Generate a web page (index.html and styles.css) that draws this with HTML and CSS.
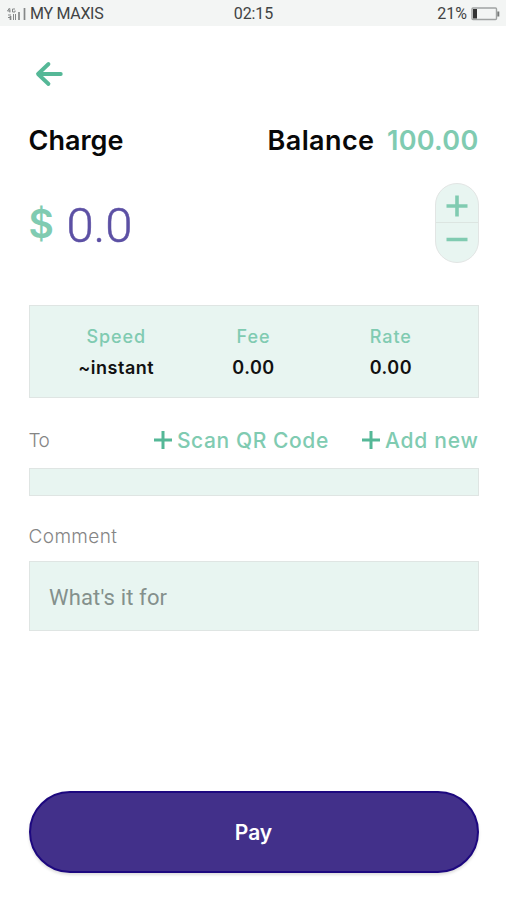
FILE: index.html
```html
<!DOCTYPE html>
<html lang="en">
<head>
<meta charset="utf-8">
<title>Charge</title>
<link rel="stylesheet" href="styles.css">
</head>
<body>
<header class="status">
  <div class="carrier">
    <svg class="signal" width="20" height="14" viewBox="0 0 20 14" fill="none" stroke="#858888">
      <path d="M2.5 1 L.5 4 H3.5 M2.8 1.5 V5.5 M8 2 H5.5 V5 H8 V3.5 M1 8 H4 M1 10.5 H4 M6.500 7 V13 M8.500 7 V13" stroke-width="1"/>
      <path d="M3.500 9 V13 M12 5 V13 M17.500 1 V13" stroke-width="1.7"/>
    </svg>
    <span>MY MAXIS</span>
  </div>
  <div class="clock">02:15</div>
  <div class="power">
    <span>21%</span>
    <svg width="29" height="14" viewBox="0 0 29 14" fill="none">
      <rect x="1" y="1" width="24.500" height="11.500" rx="1" stroke="#a0a3a2" stroke-width="1.400"/>
      <rect x="2" y="2" width="4" height="9.500" fill="#333"/>
      <path d="M27.300 4.500 V9.500" stroke="#777a79" stroke-width="2"/>
    </svg>
  </div>
</header>
<main class="page">
  <button class="back" aria-label="Back">
    <svg width="28" height="26" viewBox="0 0 28 26" fill="none" stroke="#55b897" stroke-width="3.800" stroke-linecap="round" stroke-linejoin="round">
      <path d="M25.800 13 H3.500 M13.500 3 L3 13 L13.500 23"/>
    </svg>
  </button>
  <div class="row heading">
    <span class="charge">Charge</span>
    <span class="balance"><span class="balance-label">Balance</span><span class="balance-value">100.00</span></span>
  </div>
  <div class="row amount">
    <div class="sum"><span class="currency">$</span><span class="number">0.0</span></div>
    <div class="stepper">
      <button aria-label="Increase"><svg width="22" height="22" viewBox="0 0 22 22" stroke="#80cbb1" stroke-width="3.600"><path d="M.5 11 H21.500 M11 .5 V21.500"/></svg></button>
      <button aria-label="Decrease"><svg width="22" height="22" viewBox="0 0 22 22" stroke="#80cbb1" stroke-width="3.600"><path d="M.5 7.500 H21.500"/></svg></button>
    </div>
  </div>
  <dl class="info">
    <div><dt class="speed">Speed</dt><dd class="instant">~instant</dd></div>
    <div><dt>Fee</dt><dd>0.00</dd></div>
    <div><dt>Rate</dt><dd>0.00</dd></div>
  </dl>
  <div class="row recipient">
    <span class="label">To</span>
    <div class="links">
      <span class="link"><svg width="18" height="18" viewBox="0 0 18 18" stroke="#55b897" stroke-width="3"><path d="M0 9 H18 M9 0 V18"/></svg><span class="scan">Scan QR Code</span></span>
      <span class="link"><svg width="18" height="18" viewBox="0 0 18 18" stroke="#55b897" stroke-width="3"><path d="M0 9 H18 M9 0 V18"/></svg><span class="add">Add new</span></span>
    </div>
  </div>
  <div class="field target"></div>
  <div class="label comment">Comment</div>
  <div class="field note">What's it for</div>
  <button class="pay">Pay</button>
</main>
</body>
</html>
```

FILE: styles.css
```css
* { box-sizing: border-box; }
body { margin: 0; height: 900px; background: #fff; font-family: Inter, "Liberation Sans", sans-serif; }
button { border: 0; padding: 0; background: none; font: inherit; color: inherit; }
svg { display: block; flex: none; }
.status { height: 26px; background: #f3f5f4; display: grid; grid-template-columns: 1fr auto 1fr; align-items: center; padding: 1px 6px 0 7px; font: 16px/25px Roboto, sans-serif; color: #414343; }
.carrier { display: flex; align-items: center; gap: 3px; letter-spacing: -0.3px; }
.power { display: flex; align-items: center; justify-content: flex-end; gap: 4px; }
.clock { letter-spacing: -0.1px; }
.page { height: 874px; padding: 35px 27.5px 0 28.5px; display: flex; flex-direction: column; }
.back { width: 42px; height: 26px; padding-left: 6.5px; flex: none; }
.row { display: flex; justify-content: space-between; align-items: center; flex: none; }
.heading { height: 40px; margin-top: 33px; font-size: 27px; font-weight: 600; color: #080808; }
.charge { letter-spacing: 0; }
.balance { display: flex; gap: 12.5px; letter-spacing: .4px; }
.balance-value { color: #80cbb1; letter-spacing: .3px; }
.amount { height: 80px; margin-top: 23px; }
.sum { display: flex; align-items: center; gap: 12.5px; }
.currency { font-size: 39px; font-weight: 600; color: #80cbb1; }
.number { padding-top: 5px; font: 300 49px/60px Roboto, sans-serif; color: #5c50a4; -webkit-text-stroke: .5px #5c50a4; }
.stepper { width: 44px; height: 80px; border: 1.500px solid #e2e5e4; border-radius: 22px; background: #e8f5f1; overflow: hidden; }
.stepper button { display: flex; align-items: center; justify-content: center; width: 100%; height: 39px; }
.stepper button:first-child { border-bottom: 1px solid #dce5e1; padding-top: 5px; }
.info { height: 93px; margin: 42px 0 0; padding: 16px 18px; border: 1px solid #dfe5e3; background: #e8f5f1; display: grid; grid-template-columns: repeat(3, 1fr); text-align: center; flex: none; }
.info dt { font-size: 18px; line-height: 30px; font-weight: 500; letter-spacing: .9px; color: #80cbb1; }
.info dd { margin: 0; font-size: 18px; line-height: 31px; font-weight: 600; letter-spacing: .5px; color: #111; }
.recipient { height: 40px; margin-top: 22px; }
.label { font-size: 19px; font-weight: 300; color: #858585; }
.links { display: flex; gap: 33px; }
.link { display: flex; align-items: center; gap: 5px; font-size: 21px; font-weight: 500; color: #80cbb1; letter-spacing: .6px; }
.add { letter-spacing: .8px; margin-right: -.3px; }
.field { border: 1px solid #dfe5e3; background: #e8f5f1; flex: none; }
.target { height: 28px; margin-top: 8px; }
.comment { height: 30px; line-height: 30px; margin-top: 26px; letter-spacing: .4px; }
.recipient .label { letter-spacing: -.7px; }
.note { height: 70px; margin-top: 9px; padding-left: 19.500px; font: 22px/71px Roboto, sans-serif; letter-spacing: .15px; color: #84908c; }
.pay { height: 82px; margin-top: 160px; border: 2px solid #1d087f; border-radius: 41px; background: #42308a; color: #fff; font-size: 21px; font-weight: 600; box-shadow: 0 2px 3px #0002; flex: none; }
```
